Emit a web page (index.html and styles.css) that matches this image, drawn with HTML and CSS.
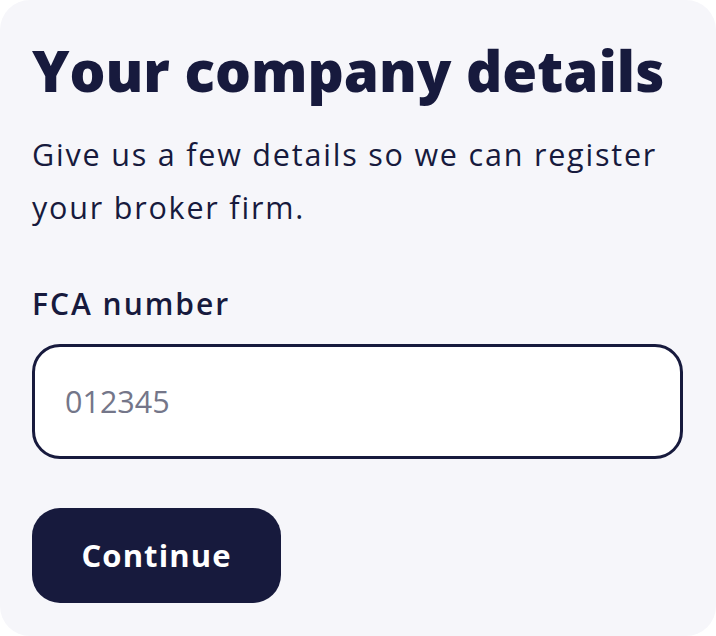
FILE: index.html
```html
<!DOCTYPE html>
<html lang="en">
<head>
<meta charset="utf-8">
<title>Your company details</title>
<link rel="stylesheet" href="styles.css">
</head>
<body>
<main class="card">
  <h1 class="title">Your company details</h1>
  <p class="intro">Give us a few details so we can register your broker firm.</p>
  <form class="form">
    <label class="label" for="fca">FCA number</label>
    <input class="field" id="fca" type="text" placeholder="012345">
    <div class="actions">
      <button class="button" type="button">Continue</button>
    </div>
  </form>
</main>
</body>
</html>
```
FILE: styles.css
```css
html, body {
  margin: 0;
  padding: 0;
  background: #ffffff;
}

.card {
  box-sizing: border-box;
  width: 716px;
  height: 636px;
  padding: 37px 33px 0 32px;
  background: #f6f6fa;
  border-radius: 30px;
  font-family: "Open Sans", sans-serif;
  color: #171a3d;
  display: flex;
  flex-direction: column;
}

.title {
  margin: 0;
  font-size: 56.5px;
  line-height: 1.2;
  font-weight: 800;
  letter-spacing: 0;
}

.intro {
  margin: 23px 0 0 0;
  font-size: 30.5px;
  line-height: 53px;
  font-weight: 400;
  letter-spacing: 1.8px;
}

.form {
  margin-top: 50px;
  display: flex;
  flex-direction: column;
}

.label {
  font-size: 30px;
  line-height: 40px;
  font-weight: 600;
  letter-spacing: 2px;
}

.field {
  box-sizing: border-box;
  margin-top: 20px;
  width: 651px;
  height: 115px;
  padding: 0 24px 0 30px;
  border: 3.5px solid #171a3d;
  border-radius: 28px;
  background: #ffffff;
  font-family: "Open Sans", sans-serif;
  font-size: 30.5px;
  color: #171a3d;
  outline: none;
}

.field::placeholder {
  color: #747689;
  opacity: 1;
}

.actions {
  margin-top: 49px;
  display: flex;
}

.button {
  box-sizing: border-box;
  height: 95px;
  padding: 0 49.5px;
  border: none;
  border-radius: 28px;
  background: #171a3d;
  color: #ffffff;
  font-family: "Open Sans", sans-serif;
  font-size: 31px;
  font-weight: 700;
  letter-spacing: 1.1px;
  cursor: pointer;
}
```
